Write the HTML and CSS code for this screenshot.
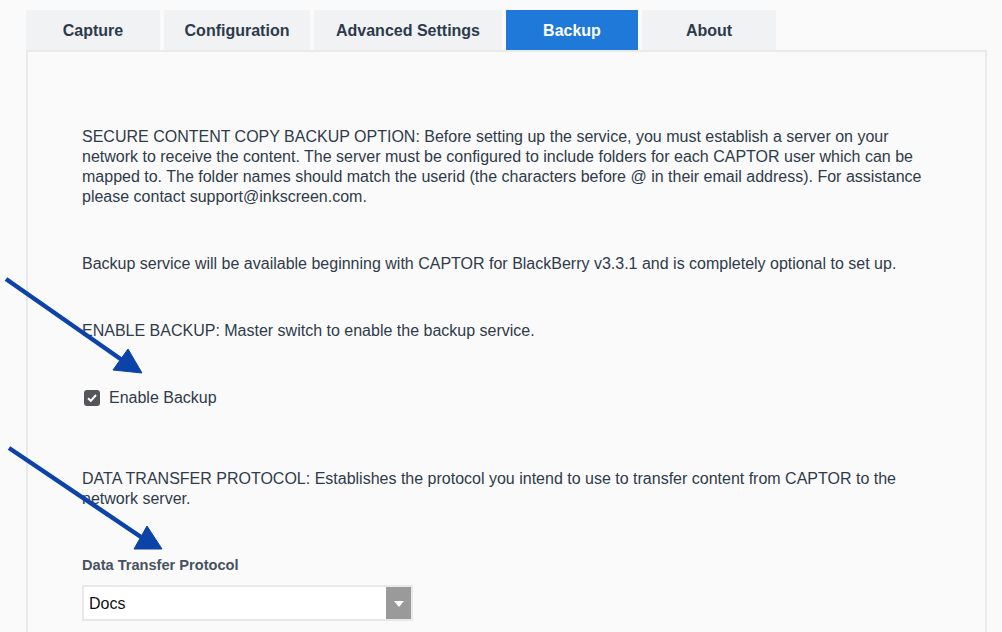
FILE: index.html
```html
<!DOCTYPE html>
<html lang="en">
<head>
    <meta charset="UTF-8">
    <meta name="viewport" content="width=device-width, initial-scale=1.0">
    <title>CAPTOR Admin - Backup</title>
    <link rel="stylesheet" href="styles.css">
</head>
<body>
    <nav class="tabs">
        <a class="tab tab-capture">Capture</a>
        <a class="tab tab-config">Configuration</a>
        <a class="tab tab-advanced">Advanced Settings</a>
        <a class="tab tab-backup active">Backup</a>
        <a class="tab tab-about">About</a>
    </nav>

    <div class="panel">
        <p class="intro">SECURE CONTENT COPY BACKUP OPTION: Before setting up the service, you must establish a server on your network to receive the content. The server must be configured to include folders for each CAPTOR user which can be mapped to. The folder names should match the userid (the characters before @ in their email address). For assistance please contact support@inkscreen.com.</p>

        <p class="note">Backup service will be available beginning with CAPTOR for BlackBerry v3.3.1 and is completely optional to set up.</p>

        <p class="note">ENABLE BACKUP: Master switch to enable the backup service.</p>

        <label class="check">
            <span class="check-box">
                <svg width="12" height="12" viewBox="0 0 12 12">
                    <path d="M2 6.2 L4.8 8.8 L10 3" fill="none" stroke="#fff" stroke-width="2"/>
                </svg>
            </span>
            Enable Backup
        </label>

        <p class="note protocol-note">DATA TRANSFER PROTOCOL: Establishes the protocol you intend to use to transfer content from CAPTOR to the network server.</p>

        <div class="field">
            <label class="field-label" for="protocol">Data Transfer Protocol</label>
            <div class="select-wrap">
                <select id="protocol">
                    <option>Docs</option>
                    <option>FTP</option>
                    <option>SFTP</option>
                    <option>WebDAV</option>
                </select>
                <span class="select-arrow"></span>
            </div>
        </div>
    </div>

    <!-- callout arrows drawn on top of the page -->
    <svg class="callouts" width="1002" height="632" viewBox="0 0 1002 632">
        <g fill="#0b43a9" stroke="#0b43a9">
            <line x1="6" y1="279" x2="122" y2="360" stroke-width="4.5"/>
            <polygon points="113,370 128,349 142,373" stroke-width="1"/>
            <line x1="9" y1="448" x2="141" y2="537" stroke-width="4.5"/>
            <polygon points="134,549 147,526 162,549" stroke-width="1"/>
        </g>
    </svg>
</body>
</html>
```

FILE: styles.css
```css
body {
    margin: 0;
    background: #fafafa;
    font-family: "Liberation Sans", Arial, sans-serif;
    color: #2f3b4a;
    font-size: 16px;
    line-height: 20px;
}
.tabs {
    display: flex;
    gap: 4px;
    padding: 10px 0 0 26px;
}
.tab {
    height: 40px;
    padding-top: 2px;
    box-sizing: border-box;
    display: flex;
    align-items: center;
    justify-content: center;
    background: #f1f2f4;
    color: #2c3b4c;
    font-weight: bold;
    font-size: 16px;
}
.tab-capture { width: 134px; }
.tab-config { width: 146px; }
.tab-advanced { width: 188px; }
.tab-backup { width: 132px; }
.tab-about { width: 134px; }
.tab.active {
    background: #1e79d9;
    color: #fff;
}
.panel {
    margin-left: 26px;
    width: 961px;
    min-height: 600px;
    border: 2px solid #e9eaeb;
    padding: 75px 54px 0 54px;
    box-sizing: border-box;
    background: #fafafa;
}
.panel p {
    margin: 0;
}
.note {
    margin-top: 47px !important;
}
.check {
    display: flex;
    align-items: center;
    gap: 9px;
    margin-top: 47px;
    padding-left: 2px;
    color: #2f3b4a;
}
.check-box {
    width: 16px;
    height: 16px;
    border-radius: 3px;
    background: #555659;
    display: flex;
    align-items: center;
    justify-content: center;
}
.protocol-note {
    margin-top: 61px !important;
}
.field {
    margin-top: 47px;
}
.field-label {
    display: block;
    font-size: 14.6px;
    font-weight: bold;
    line-height: 18px;
    color: #48525e;
}
.select-wrap {
    position: relative;
    width: 331px;
    height: 36px;
    margin-top: 11px;
}
.select-wrap select {
    appearance: none;
    width: 100%;
    height: 100%;
    border: 2px solid #e8e8e8;
    background: #fff;
    font-family: "Liberation Sans", Arial, sans-serif;
    font-size: 16px;
    color: #111;
    padding: 0 0 0 5px;
    border-radius: 0;
}
.select-arrow {
    position: absolute;
    top: 2px;
    right: 2px;
    width: 25px;
    height: 32px;
    background: #9a9a9a;
    pointer-events: none;
}
.select-arrow::after {
    content: "";
    position: absolute;
    left: 8px;
    top: 14px;
    border-left: 5px solid transparent;
    border-right: 5px solid transparent;
    border-top: 6px solid #fff;
}
.callouts {
    position: absolute;
    top: 0;
    left: 0;
    pointer-events: none;
}
```
